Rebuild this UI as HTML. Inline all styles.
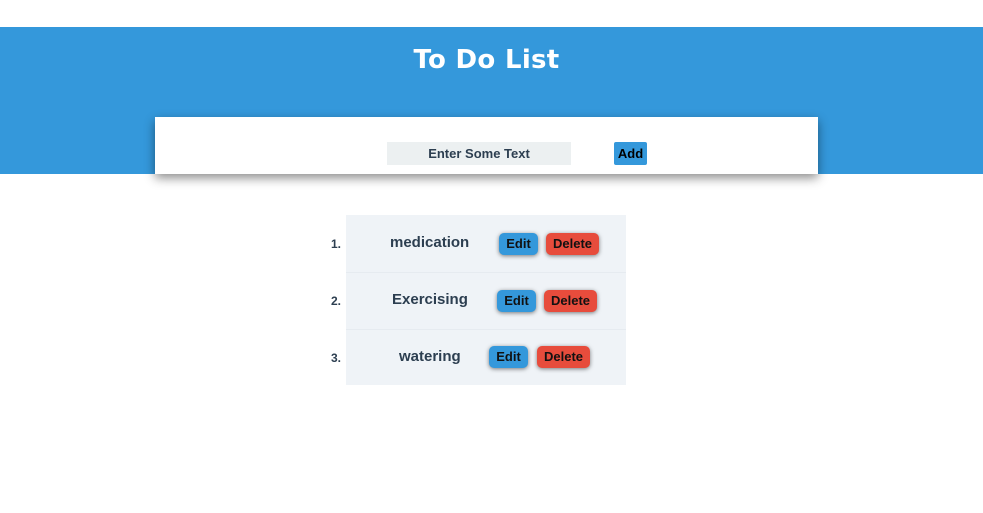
<!DOCTYPE html>
<html><head><style>
body{margin:0;width:983px;height:513px;background:#fff;font-family:"Liberation Sans",Arial,Helvetica,sans-serif;position:relative;overflow:hidden}
div{font-family:"Liberation Sans",Arial,Helvetica,sans-serif}
.hdr{position:absolute;left:0;top:27px;width:983px;height:147px;background:#3498db}
h1{position:absolute;top:45px;left:0;width:973px;margin:0;text-align:center;color:#fff;font-weight:bold;font-size:26px;font-family:"DejaVu Sans",Verdana,sans-serif;letter-spacing:0.3px}
.card{position:absolute;left:155px;top:117px;width:663px;height:57px;background:#fff;box-shadow:0 4px 10px rgba(0,0,0,.45)}
.inp{position:absolute;left:387px;top:142px;width:184px;height:23px;background:#ecf0f1;color:#2c3e50;font-weight:bold;font-size:13px;line-height:23px;text-align:center}
.add{position:absolute;left:614px;top:142px;width:33px;height:23px;background:#3498db;color:#000;font-weight:bold;font-size:13px;line-height:23px;text-align:center;border-radius:2px}
.list{position:absolute;left:346px;top:215px;width:280px;height:170px;background:#eff3f7}
.sep{position:absolute;left:346px;width:280px;height:1px;background:#e6ebf0}
.num{position:absolute;left:331px;font-weight:bold;font-size:12px;color:#2c3e50}
.t{position:absolute;font-weight:bold;font-size:15px;color:#2c3e50}
.b{position:absolute;height:22px;line-height:22px;border-radius:5px;font-weight:bold;font-size:13px;color:#111;text-align:center;box-shadow:0 1px 4px rgba(0,0,0,.5)}
.e{background:#3498db;width:39px}.d{background:#e74c3c;width:53px}
</style></head><body>
<div class="hdr"></div>
<h1>To Do List</h1>
<div class="card"></div>
<div class="inp">Enter Some Text</div>
<div class="add">Add</div>
<div class="list"></div>
<div class="sep" style="top:272px"></div>
<div class="sep" style="top:329px"></div>
<div class="num" style="top:237px">1.</div>
<div class="t" style="left:390px;top:234px">medication</div>
<div class="b e" style="left:499px;top:233px">Edit</div>
<div class="b d" style="left:546px;top:233px">Delete</div>
<div class="num" style="top:294px">2.</div>
<div class="t" style="left:392px;top:291px">Exercising</div>
<div class="b e" style="left:497px;top:290px">Edit</div>
<div class="b d" style="left:544px;top:290px">Delete</div>
<div class="num" style="top:351px">3.</div>
<div class="t" style="left:399px;top:348px">watering</div>
<div class="b e" style="left:489px;top:346px">Edit</div>
<div class="b d" style="left:537px;top:346px">Delete</div>
</body></html>
